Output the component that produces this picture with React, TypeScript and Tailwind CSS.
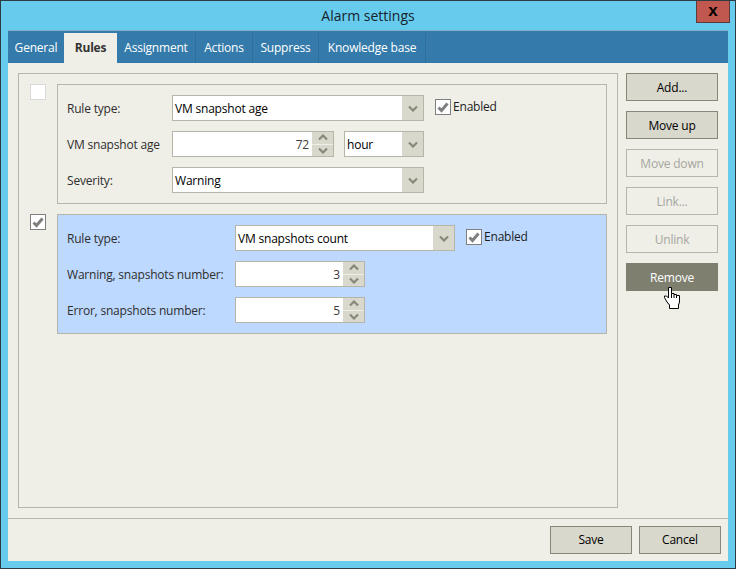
import React from "react";

const Chevron = ({ up = false }: { up?: boolean }) => (
  <svg width="10" height="7" viewBox="0 0 10 7" className="block">
    <path d={up ? "M1 5.5 L5 1.5 L9 5.5" : "M1 1.5 L5 5.5 L9 1.5"} fill="none" stroke="#87877a" strokeWidth="2.2" />
  </svg>
);

const Check = () => (
  <svg width="14" height="14" viewBox="0 0 14 14" className="block">
    <path d="M2.5 7.5 L5.5 10.5 L11.5 3.5" fill="none" stroke="#7f7f7f" strokeWidth="3" />
  </svg>
);

const CheckBox = ({ checked }: { checked: boolean }) => (
  <div
    className={`w-4 h-4 shrink-0 flex items-center justify-center bg-white border ${
      checked ? "border-[#7f7f7f]" : "border-[#d9d9d9]"
    }`}
  >
    {checked && <Check />}
  </div>
);

const Select = ({ value, className }: { value: string; className: string }) => (
  <div className={`h-[26px] flex border border-[#b5b5a8] bg-white ${className}`}>
    <div className="flex-1 flex items-center pl-[2px] pt-[1px] text-black">{value}</div>
    <div className="w-[21px] bg-[#d8d8cc] flex items-center justify-center">
      <Chevron />
    </div>
  </div>
);

const Spin = ({ value, className }: { value: string; className: string }) => (
  <div className={`h-[26px] flex border border-[#b5b5a8] bg-white ${className}`}>
    <div className="flex-1 flex items-center justify-end pr-[3px] pt-[1px] text-[#3c3c3c]">{value}</div>
    <div className="w-[21px] bg-[#d8d8cc] flex flex-col">
      <div className="flex-1 flex items-center justify-center border-b border-[#efefe7]">
        <Chevron up />
      </div>
      <div className="flex-1 flex items-center justify-center">
        <Chevron />
      </div>
    </div>
  </div>
);

const Row = ({ label, width, children }: { label: string; width: string; children: React.ReactNode }) => (
  <div className="flex items-center h-[26px]">
    <div className={`${width} shrink-0 pt-[1px] text-[#2e2e2e]`}>{label}</div>
    {children}
  </div>
);

const Enabled = () => (
  <div className="flex items-center gap-[2px] ml-[11px] mb-[2px] text-[#1c1c1c]">
    <CheckBox checked />
    <span>Enabled</span>
  </div>
);

const SideButton = ({ label, kind }: { label: string; kind: "on" | "off" | "hot" }) => {
  const style =
    kind === "on"
      ? "bg-[#d8d8cc] border-[#87877a] text-black"
      : kind === "off"
        ? "border-[#b5b5a8] text-[#a6a6a0]"
        : "bg-[#7f7f70] border-[#7f7f70] text-white";
  return <div className={`w-[92px] h-[28px] border pt-[1px] flex items-center justify-center ${style}`}>{label}</div>;
};

const tabs = [
  { label: "General", w: "w-[56px]" },
  { label: "Rules", w: "w-[53px]", active: true },
  { label: "Assignment", w: "w-[79px]", line: true },
  { label: "Actions", w: "w-[57px]", line: true },
  { label: "Suppress", w: "w-[66px]", line: true },
  { label: "Knowledge base", w: "w-[107px]", line: true },
];

export default function App() {
  return (
    <div
      className="relative w-[736px] h-[569px] overflow-hidden bg-[#66cbec] border border-[#2f3b42] flex flex-col pl-[7px] pr-[7px] pb-[7px] text-[12px] leading-none tracking-[-0.2px]"
      style={{ fontFamily: '"Open Sans", "Noto Sans", sans-serif' }}
    >
      <div className="h-[29px] shrink-0 flex items-center justify-center text-[14px] tracking-normal text-[#16242c]">
        Alarm settings
      </div>
      <div
        className="absolute top-0 left-[695px] w-[34px] h-[22px] bg-[#c0584f] border border-t-0 border-[#5d3b3b] flex items-center justify-center pb-[2px] text-[17px] font-bold text-black"
        style={{ fontFamily: '"Liberation Sans", sans-serif' }}
      >
        x
      </div>
      <div className="h-[33px] shrink-0 bg-[#347bab] border-t border-[#7eb0c6] flex items-end text-white">
        {tabs.map((t) =>
          t.active ? (
            <div key={t.label} className={`${t.w} h-[30px] bg-[#efefe7] text-[#333333] font-bold flex items-center justify-center`}>
              {t.label}
            </div>
          ) : (
            <div key={t.label} className={`${t.w} h-[30px] flex items-center justify-center ${t.line ? "border-r border-[#2f6f9b]" : ""}`}>
              {t.label}
            </div>
          ),
        )}
      </div>
      <div className="flex-1 bg-[#efefe7] flex flex-col">
        <div className="flex-1 flex gap-2 pt-[10px] pl-[10px] pr-[10px] pb-[10px]">
          <div className="w-[600px] border border-[#b5b5a8] pt-[10px] pl-[11px] pr-[10px] flex flex-col gap-[10px]">
            <div className="flex gap-[11px]">
              <CheckBox checked={false} />
              <div className="flex-1 h-[120px] border border-[#b5b5a8] pt-[10px] pl-[9px] flex flex-col gap-[10px]">
                <Row label="Rule type:" width="w-[105px]">
                  <Select value="VM snapshot age" className="w-[252px]" />
                  <Enabled />
                </Row>
                <Row label="VM snapshot age" width="w-[105px]">
                  <Spin value="72" className="w-[162px]" />
                  <Select value="hour" className="w-[80px] ml-[10px]" />
                </Row>
                <Row label="Severity:" width="w-[105px]">
                  <Select value="Warning" className="w-[252px]" />
                </Row>
              </div>
            </div>
            <div className="flex gap-[11px]">
              <CheckBox checked />
              <div className="flex-1 h-[120px] border border-[#b5b5a8] bg-[#bdd9ff] pt-[10px] pl-[9px] flex flex-col gap-[10px]">
                <Row label="Rule type:" width="w-[168px]">
                  <Select value="VM snapshots count" className="w-[220px]" />
                  <Enabled />
                </Row>
                <Row label="Warning, snapshots number:" width="w-[168px]">
                  <Spin value="3" className="w-[130px]" />
                </Row>
                <Row label="Error, snapshots number:" width="w-[168px]">
                  <Spin value="5" className="w-[130px]" />
                </Row>
              </div>
            </div>
          </div>
          <div className="flex flex-col gap-[10px]">
            <SideButton label="Add..." kind="on" />
            <SideButton label="Move up" kind="on" />
            <SideButton label="Move down" kind="off" />
            <SideButton label="Link..." kind="off" />
            <SideButton label="Unlink" kind="off" />
            <SideButton label="Remove" kind="hot" />
          </div>
        </div>
        <div className="h-[43px] shrink-0 border-t border-[#b5b5a8] flex justify-end gap-[7px] pt-[7px] pr-[7px]">
          <div className="w-[82px] h-[28px] bg-[#d8d8cc] border border-[#87877a] flex items-center justify-center text-black">Save</div>
          <div className="w-[82px] h-[28px] bg-[#d8d8cc] border border-[#87877a] flex items-center justify-center text-black">Cancel</div>
        </div>
      </div>
      <svg width="18" height="23" viewBox="0 0 18 23" className="absolute left-[663px] top-[286px]">
        <path
          d="M4.5 0.5 H7.5 V6.5 H10 V7.5 H12.5 V8.5 H15.5 V15 L14.5 18 V21.5 H5.5 V18 L3 15 L0.5 10.5 V9 H2.5 L4.5 11 Z"
          fill="white"
          stroke="black"
          strokeWidth="1"
        />
        <path d="M7.5 6.5 V11 M10 7.5 V11 M12.5 8.5 V11" fill="none" stroke="black" strokeWidth="1" />
      </svg>
    </div>
  );
}
